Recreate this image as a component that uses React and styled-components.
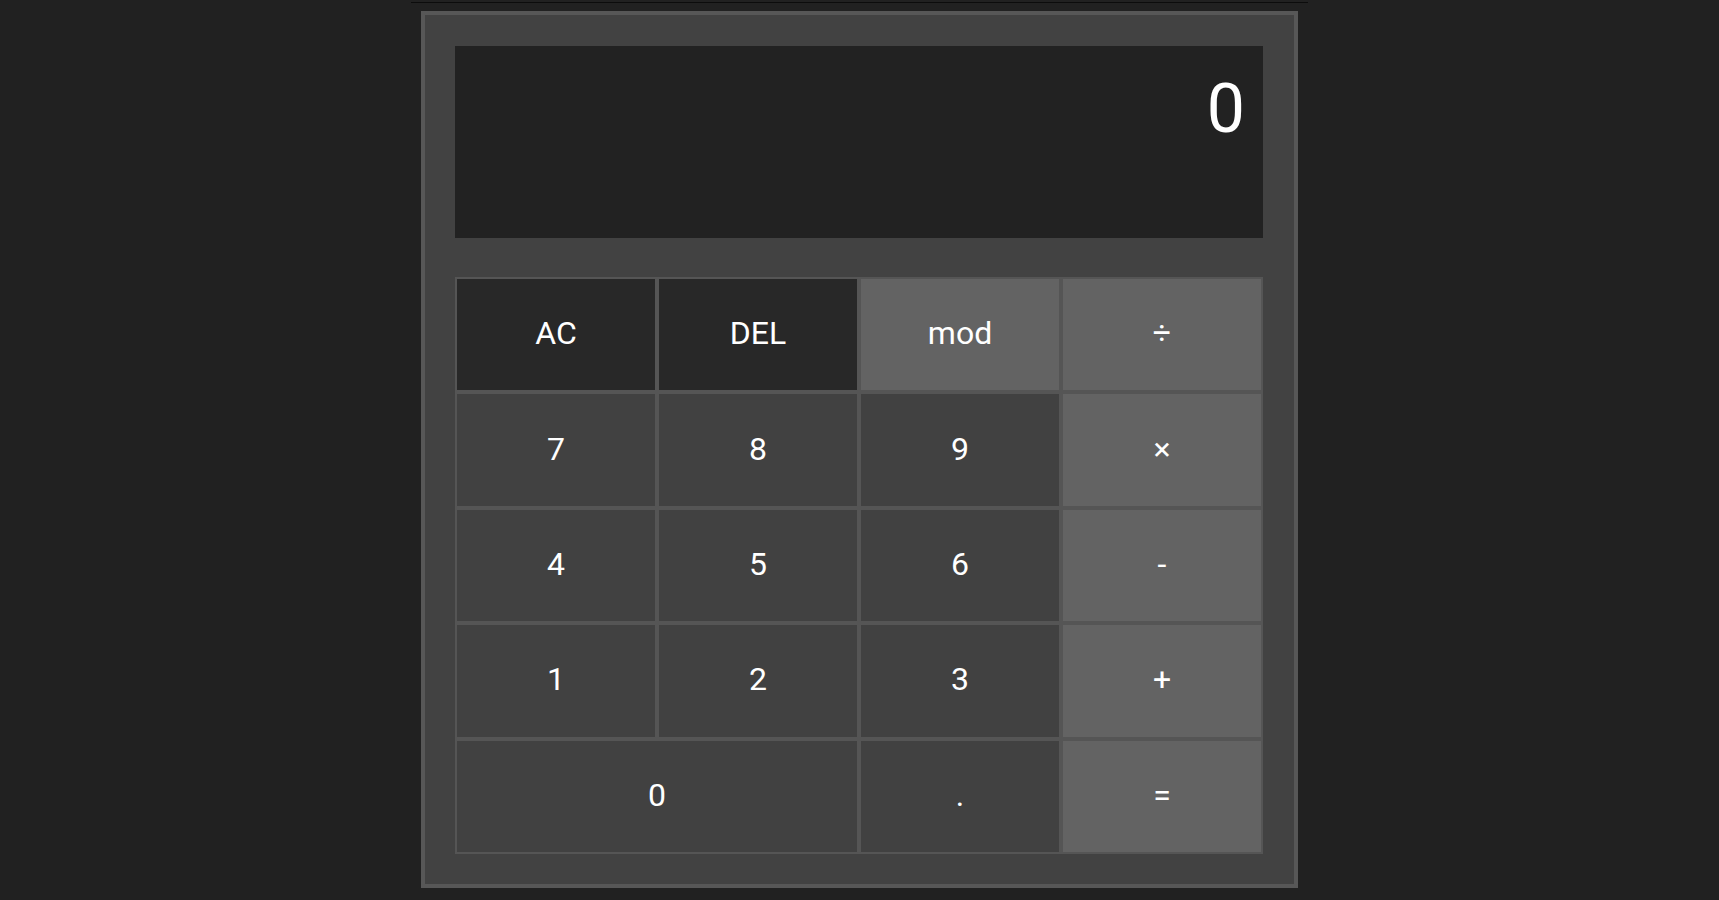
import React from 'react'
import styled, { createGlobalStyle } from 'styled-components'

const GlobalStyle = createGlobalStyle`
  html, body {
    margin: 0;
    padding: 0;
    background: #212121;
    font-family: Roboto, "Liberation Sans", Arial, sans-serif;
  }
`

const Page = styled.div`
  width: 897px;
  margin: 2px auto 0;
  border-top: 1px solid #0c0c0c;
  padding: 8px 10px 12px;
  box-sizing: border-box;
`

const Calculator = styled.div`
  box-sizing: border-box;
  width: 877px;
  border: 4px solid #575757;
  background: #424242;
  padding: 31px 31px 30px 30px;
`

const Display = styled.div`
  box-sizing: border-box;
  height: 192px;
  background: #222222;
  color: #ffffff;
  font-size: 68px;
  line-height: 80px;
  text-align: right;
  padding: 23px 18px 0;
  margin-bottom: 39px;
`

const Keypad = styled.div`
  display: grid;
  grid-template-columns: repeat(4, 1fr);
  grid-template-rows: repeat(5, 1fr);
  width: 808px;
  height: 577px;
`

const tones = {
  clear: '#282828',
  num: '#414141',
  op: '#636363',
}

const Key = styled.button`
  box-sizing: border-box;
  grid-column: span ${(props) => props.span || 1};
  border: 2px solid #555555;
  background: ${(props) => tones[props.tone || 'num']};
  color: #ffffff;
  font-family: Roboto, "Liberation Sans", Arial, sans-serif;
  font-size: 32px;
  padding: 0 0 3px;
  margin: 0;
  cursor: pointer;
  outline: none;
`

const keys = [
  { label: 'AC', tone: 'clear' },
  { label: 'DEL', tone: 'clear' },
  { label: 'mod', tone: 'op' },
  { label: '÷', tone: 'op' },
  { label: '7' },
  { label: '8' },
  { label: '9' },
  { label: '×', tone: 'op' },
  { label: '4' },
  { label: '5' },
  { label: '6' },
  { label: '-', tone: 'op' },
  { label: '1' },
  { label: '2' },
  { label: '3' },
  { label: '+', tone: 'op' },
  { label: '0', span: 2 },
  { label: '.' },
  { label: '=', tone: 'op' },
]

export default function App() {
  return (
    <>
      <GlobalStyle />
      <Page>
        <Calculator>
          <Display>0</Display>
          <Keypad>
            {keys.map((k) => (
              <Key key={k.label} tone={k.tone} span={k.span}>
                {k.label}
              </Key>
            ))}
          </Keypad>
        </Calculator>
      </Page>
    </>
  )
}
